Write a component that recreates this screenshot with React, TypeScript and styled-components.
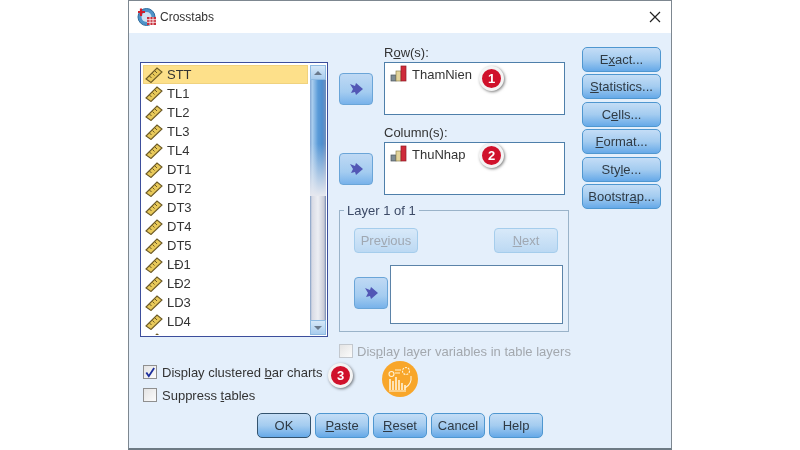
import React from "react";
import styled, { createGlobalStyle } from "styled-components";

const Global = createGlobalStyle`
  html, body { margin: 0; padding: 0; background: #ffffff; }
  body { font-family: "Liberation Sans", Arial, sans-serif; color: #2a2a2a; }
  #root { width: 800px; height: 450px; overflow: hidden; }
`;

const Page = styled.div`
  width: 800px;
  height: 450px;
  display: flex;
  justify-content: center;
`;
const Dialog = styled.div`
  position: relative;
  width: 544px;
  height: 450px;
  box-sizing: border-box;
  border: 1px solid #7d8790;
  border-bottom: 2px solid #6d7a84;
  display: flex;
  flex-direction: column;
  background: #e4effb;
  filter: blur(0.3px);
`;
const TitleBar = styled.div`
  height: 32px;
  flex: none;
  background: #ffffff;
  display: flex;
  align-items: center;
  padding: 0 10px 0 8px;
  gap: 3px;
`;
const Title = styled.span`
  font-size: 12px;
  color: #333;
  flex: 1;
`;
const Body = styled.div`
  flex: 1;
  display: flex;
  flex-direction: column;
  padding: 0 0 0 11px;
`;
const Main = styled.div`
  display: flex;
  align-items: flex-start;
  height: 380px;
  flex: none;
`;
const LeftCol = styled.div`
  width: 188px;
  flex: none;
  padding-top: 29px;
`;
const ListBox = styled.div`
  width: 188px;
  height: 275px;
  box-sizing: border-box;
  border: 1px solid #3c4e9c;
  background: #fff;
  display: flex;
  padding: 2px 1px 1px 2px;
`;
const ListItems = styled.div`
  flex: 1;
  overflow: hidden;
`;
const Item = styled.div<{ $selected?: boolean }>`
  height: 19px;
  box-sizing: border-box;
  display: flex;
  align-items: center;
  gap: 4px;
  padding-left: 1px;
  margin-right: 2px;
  font-size: 13px;
  color: #333;
  background: ${(p) => (p.$selected ? "#fde08a" : "transparent")};
  border: 1px solid ${(p) => (p.$selected ? "#f0d27e" : "transparent")};
`;
const Scrollbar = styled.div`
  width: 16px;
  flex: none;
  display: flex;
  flex-direction: column;
`;
const ScrollBtn = styled.div`
  height: 15px;
  flex: none;
  background: linear-gradient(#d6e8f8, #a9cdee);
  border: 1px solid #8fbbe2;
  box-sizing: border-box;
  display: flex;
  align-items: center;
  justify-content: center;
`;
const Thumb = styled.div`
  height: 116px;
  flex: none;
  background: linear-gradient(180deg, transparent 55%, #e6e8ef 100%),
    linear-gradient(90deg, #86a8d2, #a9cdee 15%, #5a9bd8 50%, #4f8fcf 75%, #6f8fbd);
`;
const Track = styled.div`
  flex: 1;
  background: linear-gradient(90deg, #7f9cc4, #d8dae4 12%, #eceef3 50%, #c8cad6 88%, #6f86b0);
`;
const Tri = styled.div<{ $down?: boolean }>`
  width: 0;
  height: 0;
  border-left: 4px solid transparent;
  border-right: 4px solid transparent;
  ${(p) => (p.$down ? "border-top: 4px solid #6a7a8c;" : "border-bottom: 4px solid #6a7a8c;")}
`;
const LeftCheck = styled.label<{ $top: number }>`
  display: flex;
  align-items: center;
  gap: 5px;
  margin-top: ${(p) => p.$top}px;
  margin-left: 3px;
  height: 16px;
  font-size: 13px;
  color: #333;
  white-space: nowrap;
`;
const CenterCol = styled.div`
  width: 230px;
  flex: none;
  margin-left: 11px;
  display: flex;
  flex-direction: column;
`;
const FieldRow = styled.div<{ $top: number }>`
  display: flex;
  align-items: flex-start;
  margin-top: ${(p) => p.$top}px;
`;
const ArrowBtn = styled.div`
  width: 34px;
  height: 32px;
  flex: none;
  box-sizing: border-box;
  border: 1px solid #6aa5d8;
  border-radius: 4px;
  background: linear-gradient(#bfd9f4, #a4ccf0 60%, #78b2ea);
  display: flex;
  align-items: center;
  justify-content: center;
`;
const FieldArrow = styled(ArrowBtn)`
  margin-top: 28px;
`;
const FieldCol = styled.div`
  margin-left: 11px;
  width: 181px;
  flex: none;
`;
const FieldLabel = styled.div`
  height: 17px;
  font-size: 13px;
  line-height: 16px;
  color: #333;
`;
const FieldBox = styled.div`
  width: 181px;
  height: 53px;
  box-sizing: border-box;
  background: #fff;
  border: 1px solid #4e7faa;
  padding: 2px 5px;
  display: flex;
  align-items: flex-start;
  gap: 4px;
  font-size: 13px;
  color: #333;
  line-height: 19px;
`;
const LayerGroup = styled.fieldset`
  margin: 8px 0 0 0;
  padding: 10px 5px 8px 14px;
  width: 230px;
  height: 129px;
  flex: none;
  box-sizing: border-box;
  border: 1px solid #9ab3c9;
  min-width: 0;
`;
const LayerLegend = styled.legend`
  font-size: 13px;
  color: #3c4a66;
  padding: 0 3px;
  margin-left: -10px;
`;
const NavRow = styled.div`
  display: flex;
  justify-content: space-between;
  padding-right: 5px;
`;
const NavBtn = styled.div`
  width: 64px;
  height: 25px;
  box-sizing: border-box;
  border: 1px solid #a5cdec;
  border-radius: 4px;
  background: linear-gradient(#d8e9f9, #bcd9f3);
  color: #a0a8b2;
  font-size: 13px;
  display: flex;
  align-items: center;
  justify-content: center;
`;
const LayerRow = styled.div`
  display: flex;
  align-items: flex-start;
  margin-top: 12px;
`;
const LayerArrow = styled(ArrowBtn)`
  margin-top: 12px;
`;
const LayerBox = styled.div`
  margin-left: 2px;
  width: 175px;
  height: 59px;
  box-sizing: border-box;
  background: #fff;
  border: 1px solid #5b83a8;
`;
const LayerCheck = styled.div`
  margin-top: 11px;
  font-size: 13px;
  color: #a3a8ae;
  height: 16px;
  display: flex;
  align-items: center;
  gap: 4px;
  white-space: nowrap;
  width: 240px;
`;
const RightCol = styled.div`
  flex: none;
  margin-left: 13px;
  margin-top: 14px;
  display: flex;
  flex-direction: column;
  gap: 2.4px;
`;
const Btn = styled.div<{ $w?: number; $default?: boolean }>`
  width: ${(p) => p.$w ?? 79}px;
  height: 25px;
  box-sizing: border-box;
  border: 1px solid ${(p) => (p.$default ? "#33536e" : "#4f97d0")};
  border-radius: 5px;
  background: linear-gradient(#c4ddf6, #a4ccf0 50%, #66a9e8);
  color: #2f3a44;
  font-size: 13px;
  display: flex;
  align-items: center;
  justify-content: center;
`;
const U = styled.span`
  text-decoration: underline;
`;
const CheckBoxFace = styled.span<{ $faded?: boolean }>`
  width: 14px;
  height: 14px;
  flex: none;
  box-sizing: border-box;
  border: 1px solid ${(p) => (p.$faded ? "#c3c8ce" : "#8f8f8f")};
  background: linear-gradient(135deg, #e4e4e4, #fbfbfb);
  display: flex;
  align-items: center;
  justify-content: center;
`;
const Footer = styled.div`
  display: flex;
  gap: 4px;
  margin-left: 117px;
`;
const Badge = styled.div<{ $x: number; $y: number }>`
  position: absolute;
  left: ${(p) => p.$x}px;
  top: ${(p) => p.$y}px;
  width: 25px;
  height: 25px;
  box-sizing: border-box;
  border-radius: 50%;
  background: #d0112b;
  border: 3px solid #f4f4f4;
  box-shadow: 1px 1px 3px rgba(0, 0, 0, 0.5);
  color: #fff;
  font-size: 13px;
  font-weight: bold;
  display: flex;
  align-items: center;
  justify-content: center;
`;
const Logo = styled.div`
  position: absolute;
  left: 253px;
  top: 360px;
  width: 36px;
  height: 36px;
  border-radius: 50%;
  background: #f8a62a;
  display: flex;
  align-items: center;
  justify-content: center;
`;

const Ruler = () => (
  <svg width="18" height="16" viewBox="0 0 18 16" style={{ flex: "none" }}>
    <path d="M1 12 L12 1 L17 5 L6 15.5 Z" fill="#e8c95a" stroke="#6c5a26" strokeWidth="1.1" />
    <path d="M4.5 9 L6.5 11 M7.5 6.5 L9.5 8.5 M10 4 L12 6" stroke="#6c5a26" strokeWidth="1" />
  </svg>
);
const Bars = () => (
  <svg width="18" height="18" viewBox="0 0 18 18" style={{ flex: "none" }}>
    <rect x="1" y="10" width="5" height="6" fill="#7f8c94" stroke="#4c555c" strokeWidth="0.7" />
    <rect x="6" y="6" width="5" height="10" fill="#e3d49b" stroke="#8c8050" strokeWidth="0.7" />
    <rect x="11" y="1" width="5" height="15" fill="#cf2b3a" stroke="#8e1a26" strokeWidth="0.7" />
  </svg>
);
const Arrow = () => (
  <svg width="15" height="14" viewBox="0 0 15 14">
    <path d="M1 2 L6 4 L7 1 L14 7 L7 13 L6 10 L2 11 L4 7 Z" fill="#5257b5" />
  </svg>
);
const TitleIcon = () => (
  <svg width="20" height="20" viewBox="0 0 20 20">
    <circle cx="9.5" cy="10" r="8.5" fill="#4f93c8" stroke="#2e6c9e" />
    <circle cx="9.5" cy="10" r="5" fill="#cfe3f2" />
    <path d="M4 1.5 V9 M1 5 H8" stroke="#d0202c" strokeWidth="2.2" />
    <rect x="10" y="10" width="9" height="8" fill="#c9303c" />
    <path d="M10 12.7 H19 M10 15.3 H19 M13 10 V18 M16 10 V18" stroke="#fff" strokeWidth="0.8" />
  </svg>
);
const CloseIcon = () => (
  <svg width="12" height="12" viewBox="0 0 12 12">
    <path d="M1 1 L11 11 M11 1 L1 11" stroke="#222" strokeWidth="1.2" />
  </svg>
);
const Check = () => (
  <svg width="13" height="13" viewBox="0 0 13 13">
    <path d="M2.5 6.5 L5.2 10.5 L11 1.5" fill="none" stroke="#1d2f9c" strokeWidth="2" />
  </svg>
);
const LogoArt = () => (
  <svg width="26" height="26" viewBox="0 0 26 26" fill="none" stroke="#fff3d8" strokeWidth="1.1">
    <circle cx="4.5" cy="8" r="2.5" />
    <circle cx="19" cy="5" r="3.5" strokeDasharray="2 1" />
    <path d="M8 4 H14 M8 7 H13" />
    <path d="M3 24 V13 M6 24 V15 M9 24 V11 M12 24 V14 M15 24 V17 M18 24 V19" strokeWidth="1.6" />
    <path d="M24 10 A12 12 0 0 1 18 22" />
    <path d="M2 25 H19" />
  </svg>
);

const vars = ["STT", "TL1", "TL2", "TL3", "TL4", "DT1", "DT2", "DT3", "DT4", "DT5", "LĐ1", "LĐ2", "LD3", "LD4", ""];

export default function App() {
  return (
    <Page>
      <Global />
      <Dialog>
        <TitleBar>
          <TitleIcon />
          <Title>Crosstabs</Title>
          <CloseIcon />
        </TitleBar>
        <Body>
          <Main>
            <LeftCol>
              <ListBox>
                <ListItems>
                  {vars.map((v, i) => (
                    <Item key={i} $selected={i === 0}>
                      <Ruler />
                      {v}
                    </Item>
                  ))}
                </ListItems>
                <Scrollbar>
                  <ScrollBtn>
                    <Tri />
                  </ScrollBtn>
                  <Thumb />
                  <Track />
                  <ScrollBtn>
                    <Tri $down />
                  </ScrollBtn>
                </Scrollbar>
              </ListBox>
              <LeftCheck $top={27}>
                <CheckBoxFace>
                  <Check />
                </CheckBoxFace>
                <span>
                  Display clustered <U>b</U>ar charts
                </span>
              </LeftCheck>
              <LeftCheck $top={7}>
                <CheckBoxFace />
                <span>
                  Suppress <U>t</U>ables
                </span>
              </LeftCheck>
            </LeftCol>
            <CenterCol>
              <FieldRow $top={12}>
                <FieldArrow>
                  <Arrow />
                </FieldArrow>
                <FieldCol>
                  <FieldLabel>
                    R<U>o</U>w(s):
                  </FieldLabel>
                  <FieldBox>
                    <Bars />
                    ThamNien
                  </FieldBox>
                </FieldCol>
              </FieldRow>
              <FieldRow $top={10}>
                <FieldArrow>
                  <Arrow />
                </FieldArrow>
                <FieldCol>
                  <FieldLabel>Column(s):</FieldLabel>
                  <FieldBox>
                    <Bars />
                    ThuNhap
                  </FieldBox>
                </FieldCol>
              </FieldRow>
              <LayerGroup>
                <LayerLegend>Layer 1 of 1</LayerLegend>
                <NavRow>
                  <NavBtn>
                    Pre<U>v</U>ious
                  </NavBtn>
                  <NavBtn>
                    <U>N</U>ext
                  </NavBtn>
                </NavRow>
                <LayerRow>
                  <LayerArrow>
                    <Arrow />
                  </LayerArrow>
                  <LayerBox />
                </LayerRow>
              </LayerGroup>
              <LayerCheck>
                <CheckBoxFace $faded />
                <span>
                  Dis<U>p</U>lay layer variables in table layers
                </span>
              </LayerCheck>
            </CenterCol>
            <RightCol>
              <Btn>
                E<U>x</U>act...
              </Btn>
              <Btn>
                <U>S</U>tatistics...
              </Btn>
              <Btn>
                C<U>e</U>lls...
              </Btn>
              <Btn>
                <U>F</U>ormat...
              </Btn>
              <Btn>
                Sty<U>l</U>e...
              </Btn>
              <Btn>
                Bootstr<U>a</U>p...
              </Btn>
            </RightCol>
          </Main>
          <Footer>
            <Btn $w={54} $default>OK</Btn>
            <Btn $w={54}>
              <U>P</U>aste
            </Btn>
            <Btn $w={54}>
              <U>R</U>eset
            </Btn>
            <Btn $w={54}>Cancel</Btn>
            <Btn $w={54}>Help</Btn>
          </Footer>
        </Body>
        <Badge $x={350} $y={65}>1</Badge>
        <Badge $x={350} $y={142}>2</Badge>
        <Badge $x={199} $y={362}>3</Badge>
        <Logo>
          <LogoArt />
        </Logo>
      </Dialog>
    </Page>
  );
}
